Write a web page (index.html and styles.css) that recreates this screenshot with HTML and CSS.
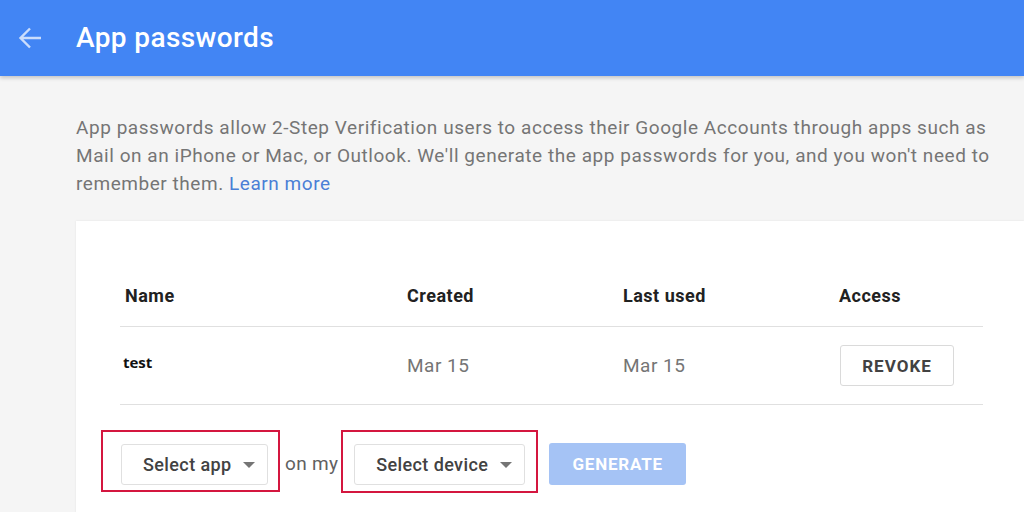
FILE: index.html
```html
<!DOCTYPE html>
<html lang="en">
<head>
  <meta charset="UTF-8">
  <title>App passwords</title>
  <link rel="stylesheet" href="styles.css">
</head>
<body>
  <header class="topbar">
    <a class="back" href="#" aria-label="Back">
      <svg width="24" height="24" viewBox="0 0 24 24">
        <path d="M23 12H2.5M12 2.5L2.5 12L12 21.5" fill="none" stroke="currentColor" stroke-width="2.4"/>
      </svg>
    </a>
    <h1>App passwords</h1>
  </header>

  <main class="content">
    <p class="intro">App passwords allow 2-Step Verification users to access their Google Accounts through apps such as Mail on an iPhone or Mac, or Outlook. We'll generate the app passwords for you, and you won't need to remember them. <a href="#">Learn more</a></p>

    <section class="card">
      <div class="table">
        <div class="row head">
          <div class="cell">Name</div>
          <div class="cell">Created</div>
          <div class="cell">Last used</div>
          <div class="cell">Access</div>
        </div>
        <div class="row item">
          <div class="cell name">test</div>
          <div class="cell date">Mar 15</div>
          <div class="cell date">Mar 15</div>
          <div class="cell"><button class="btn-revoke" type="button">REVOKE</button></div>
        </div>
      </div>

      <div class="actions">
        <div class="mark mark-app">
          <button class="select select-app" type="button">Select app<span class="caret"></span></button>
        </div>
        <span class="on-my">on my</span>
        <div class="mark mark-device">
          <button class="select select-device" type="button">Select device<span class="caret"></span></button>
        </div>
        <button class="btn-generate" type="button" disabled>GENERATE</button>
      </div>
    </section>
  </main>
</body>
</html>
```

FILE: styles.css
```css
body {
  margin: 0;
  font-family: Roboto, Arial, sans-serif;
  background-color: #f5f5f5;
  overflow: hidden;
}

.topbar {
  height: 76px;
  background-color: #4285f4;
  display: flex;
  align-items: center;
  box-shadow: 0 2px 4px rgba(0, 0, 0, 0.2);
  position: relative;
}

.back {
  display: flex;
  color: rgba(255, 255, 255, 0.72);
  margin-left: 18px;
}

.topbar h1 {
  margin: 0 0 2px 34px;
  color: #fff;
  font-size: 28px;
  font-weight: 500;
  letter-spacing: 0.4px;
}

.content {
  padding-left: 76px;
}

.intro {
  margin: 38px 0 0;
  max-width: 935px;
  font-size: 19px;
  line-height: 28px;
  letter-spacing: 0.55px;
  color: #757575;
}

.intro a {
  color: #4a7fd6;
  text-decoration: none;
}

.card {
  margin-top: 23px;
  background-color: #fff;
  padding: 43px 41px 30px 44px;
  box-shadow: 0 0 2px rgba(0, 0, 0, 0.08);
}

.row {
  display: grid;
  grid-template-columns: 282px 216px 216px 1fr;
  align-items: center;
  border-bottom: 1px solid #e0e0e0;
}

.head {
  height: 62px;
  font-size: 18px;
  font-weight: 700;
  letter-spacing: 0.5px;
  color: #212121;
}

.head .cell {
  padding-left: 5px;
}

.item {
  height: 77px;
}

.item .cell {
  padding-left: 5px;
}

.name {
  font-family: "Open Sans", sans-serif;
  font-weight: 700;
  font-size: 15px;
  color: #111;
  padding-left: 3px !important;
  margin-top: -8px;
}

.date {
  font-size: 19px;
  letter-spacing: 0.5px;
  color: #757575;
}

.btn-revoke {
  font-family: Roboto, Arial, sans-serif;
  width: 114px;
  height: 41px;
  margin-left: 1px;
  background-color: #fff;
  border: 1px solid #dadada;
  border-radius: 3px;
  font-size: 17px;
  font-weight: 700;
  letter-spacing: 1px;
  color: #424242;
}

.actions {
  display: flex;
  align-items: flex-start;
  margin: 25px 0 0 -19px;
}

.mark {
  border: 2px solid #d4163f;
}

.mark-app {
  padding: 12px 10px 5px 18px;
}

.mark-device {
  padding: 12px 11px 6px 11px;
}

.select {
  font-family: Roboto, Arial, sans-serif;
  height: 41px;
  padding: 0 0 0 21px;
  background-color: #fff;
  border: 1px solid #e0e0e0;
  border-radius: 3px;
  font-size: 18px;
  font-weight: 500;
  letter-spacing: 0.4px;
  color: #424242;
  display: flex;
  align-items: center;
  text-align: left;
}

.select-app {
  width: 147px;
}

.select-device {
  width: 171px;
}

.caret {
  margin-left: auto;
  margin-right: 12px;
  border-left: 6px solid transparent;
  border-right: 6px solid transparent;
  border-top: 6px solid #757575;
}

.on-my {
  font-size: 19px;
  letter-spacing: 0.3px;
  color: #616161;
  margin: 22px 3px 0 5px;
}

.btn-generate {
  font-family: Roboto, Arial, sans-serif;
  margin: 13px 0 0 11px;
  width: 137px;
  height: 42px;
  border: none;
  border-radius: 3px;
  background-color: #a5c3f5;
  color: #fff;
  font-size: 17px;
  font-weight: 700;
  letter-spacing: 0.8px;
}
```
